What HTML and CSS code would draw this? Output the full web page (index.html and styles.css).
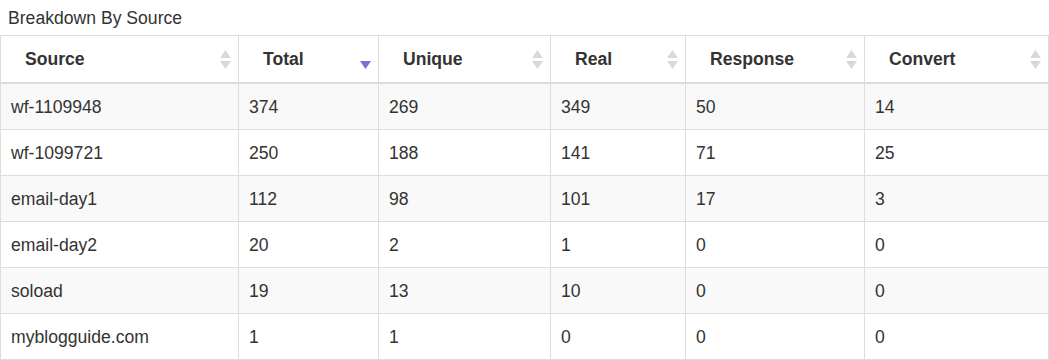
FILE: index.html
```html
<!DOCTYPE html>
<html>
<head>
<meta charset="utf-8">
<link rel="stylesheet" href="styles.css">
</head>
<body>
<div class="title">Breakdown By Source</div>
<table class="grid">
  <colgroup>
    <col class="c1"><col class="c2"><col class="c3"><col class="c4"><col class="c5"><col class="c6">
  </colgroup>
  <thead>
    <tr>
      <th><div class="th-in"><span>Source</span><svg class="sort" viewBox="0 0 11 19"><polygon points="5.5,0 11,8 0,8"/><polygon points="0,11 11,11 5.5,19"/></svg></div></th>
      <th><div class="th-in"><span>Total</span><svg class="sort desc" viewBox="0 0 11 19"><polygon points="0,11 11,11 5.5,19"/></svg></div></th>
      <th><div class="th-in"><span>Unique</span><svg class="sort" viewBox="0 0 11 19"><polygon points="5.5,0 11,8 0,8"/><polygon points="0,11 11,11 5.5,19"/></svg></div></th>
      <th><div class="th-in"><span>Real</span><svg class="sort" viewBox="0 0 11 19"><polygon points="5.5,0 11,8 0,8"/><polygon points="0,11 11,11 5.5,19"/></svg></div></th>
      <th><div class="th-in"><span>Response</span><svg class="sort" viewBox="0 0 11 19"><polygon points="5.5,0 11,8 0,8"/><polygon points="0,11 11,11 5.5,19"/></svg></div></th>
      <th><div class="th-in"><span>Convert</span><svg class="sort" viewBox="0 0 11 19"><polygon points="5.5,0 11,8 0,8"/><polygon points="0,11 11,11 5.5,19"/></svg></div></th>
    </tr>
  </thead>
  <tbody>
    <tr><td>wf-1109948</td><td>374</td><td>269</td><td>349</td><td>50</td><td>14</td></tr>
    <tr><td>wf-1099721</td><td>250</td><td>188</td><td>141</td><td>71</td><td>25</td></tr>
    <tr><td>email-day1</td><td>112</td><td>98</td><td>101</td><td>17</td><td>3</td></tr>
    <tr><td>email-day2</td><td>20</td><td>2</td><td>1</td><td>0</td><td>0</td></tr>
    <tr><td>soload</td><td>19</td><td>13</td><td>10</td><td>0</td><td>0</td></tr>
    <tr><td>myblogguide.com</td><td>1</td><td>1</td><td>0</td><td>0</td><td>0</td></tr>
  </tbody>
</table>
</body>
</html>
```
FILE: styles.css
```css
html, body {
  margin: 0;
  padding: 0;
  background: #fff;
}
body {
  font-family: "Liberation Sans", Arial, sans-serif;
  font-size: 17.6px;
  color: #333;
}
.title {
  padding: 8px 8px 0 8px;
  line-height: 20px;
  margin-bottom: 7px;
}
.grid {
  border-collapse: collapse;
  table-layout: fixed;
  width: 1048px;
  border: 1px solid #ddd;
}
.c1 { width: 238px; }
.c2 { width: 140px; }
.c3 { width: 172px; }
.c4 { width: 135px; }
.c5 { width: 179px; }
.c6 { width: 184px; }
.grid th {
  border: 1px solid #ddd;
  border-bottom: 2px solid #ddd;
  padding: 0 7px 0 24px;
  height: 46px;
  text-align: left;
  font-weight: bold;
  vertical-align: middle;
}
.th-in {
  display: flex;
  align-items: center;
  justify-content: space-between;
  line-height: 24px;
}
.sort {
  width: 11px;
  height: 19px;
  fill: #d9d9d9;
  flex: none;
}
.sort.desc {
  fill: #7272d8;
}
.grid td {
  border: 1px solid #ddd;
  padding: 11px 10px 10px 10px;
  line-height: 24px;
}
.grid tbody tr:nth-child(odd) td {
  background: #f9f9f9;
}
```
